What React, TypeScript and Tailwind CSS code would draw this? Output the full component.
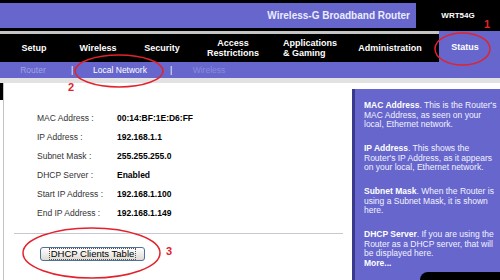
import React from "react";

const rows = [
  ["MAC Address :", "00:14:BF:1E:D6:FF"],
  ["IP Address :", "192.168.1.1"],
  ["Subnet Mask :", "255.255.255.0"],
  ["DHCP Server :", "Enabled"],
  ["Start IP Address :", "192.168.1.100"],
  ["End IP Address :", "192.168.1.149"],
];

export default function App() {
  return (
    <div className="relative w-[500px] h-[280px] overflow-hidden bg-white font-['Liberation_Sans',Arial,sans-serif]">
      {/* Title bar */}
      <div className="flex h-[31px] bg-black">
        <div className="w-[416px] mt-[3px] h-[25px] bg-[#6666cc] flex items-center justify-end pr-[6px] text-[10px] font-bold text-[#ececff]">
          Wireless-G Broadband Router
        </div>
        <div className="flex-1 flex items-center justify-center text-[8px] font-bold text-white">WRT54G</div>
      </div>

      {/* Main nav */}
      <div className="flex h-[31px] bg-black">
        <div className="w-[439px] flex flex-col">
          <div className="h-[3px] bg-[#c4c4c4]" />
          <div className="flex-1 flex items-center text-[9px] font-bold text-white leading-[10px]">
            <div className="w-[68px] text-center">Setup</div>
            <div className="w-[60px] text-center">Wireless</div>
            <div className="w-[68px] text-center">Security</div>
            <div className="w-[74px] text-center">
              Access
              <br />
              Restrictions
            </div>
            <div className="w-[80px] text-center">
              <div className="inline-block text-left">
                Applications
                <br />
                &amp; Gaming
              </div>
            </div>
            <div className="w-[80px] text-center">Administration</div>
          </div>
        </div>
        <div className="flex-1 bg-[#6666cc] flex items-center justify-center pr-[9px] pt-[3px] text-[9px] font-bold text-white">
          Status
        </div>
      </div>

      {/* Sub nav */}
      <div className="flex items-center h-[16px] bg-[#6666cc] text-[8.5px] text-white">
        <div className="w-[66px] text-center text-[#a3a3e6]">Router</div>
        <div className="w-[12px] text-center">|</div>
        <div className="w-[84px] text-center">Local Network</div>
        <div className="w-[18px] text-center">|</div>
        <div className="w-[58px] text-center text-[#8c8cdc]">Wireless</div>
      </div>
      <div className="h-[5px] bg-[#e2e2e2]" />

      {/* Body */}
      <div className="flex h-[197px]">
        <div className="w-[3px]">
          <div className="h-[17px] bg-black" />
        </div>
        <div className="w-[349px] border-l border-[#c4c4c4] pt-[26px]">
          {rows.map(([label, value]) => (
            <div key={label} className="flex items-center h-[19px] pl-[33px] text-[8.5px]">
              <div className="w-[80px] text-[#333333]">{label}</div>
              <div className="font-bold text-black">{value}</div>
            </div>
          ))}
          <div className="mt-[10px] ml-[10px] w-[329px] h-px bg-[#c8c8d4]" />
          <button className="mt-[13px] ml-[36px] w-[105px] h-[14px] flex items-center justify-center rounded-[3px] border border-[#4f6f9c] bg-gradient-to-b from-white to-[#dedbd2] text-[9.5px] text-black leading-none">
            <span className="outline outline-1 outline-dotted outline-[#555] px-px">DHCP Clients Table</span>
          </button>
        </div>
        <div className="flex-1 mt-[6px] flex flex-col bg-[#6666cc] border-l-[3px] border-[#3a3a8a] pl-[9px] pt-[12px] text-[8.5px] leading-[9.5px] text-[#f2f2ff] whitespace-nowrap">
          <p className="mb-[14.5px]">
            <b className="text-white">MAC Address</b>. This is the Router's
            <br />
            MAC Address, as seen on your
            <br />
            local, Ethernet network.
          </p>
          <p className="mb-[14.5px]">
            <b className="text-white">IP Address</b>. This shows the
            <br />
            Router's IP Address, as it appears
            <br />
            on your local, Ethernet network.
          </p>
          <p className="mb-[14.5px]">
            <b className="text-white">Subnet Mask</b>. When the Router is
            <br />
            using a Subnet Mask, it is shown
            <br />
            here.
          </p>
          <p>
            <b className="text-white">DHCP Server</b>. If you are using the
            <br />
            Router as a DHCP server, that will
            <br />
            be displayed here.
            <br />
            <b className="text-white">More...</b>
          </p>
          <div className="mt-auto self-end w-[80px] h-[8px] bg-black rounded-tl-[10px]" />
        </div>
      </div>

      {/* Red annotations */}
      <svg className="absolute inset-0 pointer-events-none" width="500" height="280">
        <ellipse cx="462.5" cy="49" rx="27.5" ry="16" fill="none" stroke="#e3222c" strokeWidth="1.5" />
        <ellipse cx="119" cy="71" rx="44" ry="16" fill="none" stroke="#e3222c" strokeWidth="1.5" />
        <ellipse cx="91.5" cy="253" rx="68.5" ry="25" fill="none" stroke="#e3222c" strokeWidth="1.5" />
      </svg>
      <span className="absolute left-[484px] top-[19px] text-[11px] font-bold text-[#e3222c] leading-none">1</span>
      <span className="absolute left-[68px] top-[82px] text-[11px] font-bold text-[#e3222c] leading-none">2</span>
      <span className="absolute left-[166px] top-[246px] text-[11px] font-bold text-[#e3222c] leading-none">3</span>
    </div>
  );
}
